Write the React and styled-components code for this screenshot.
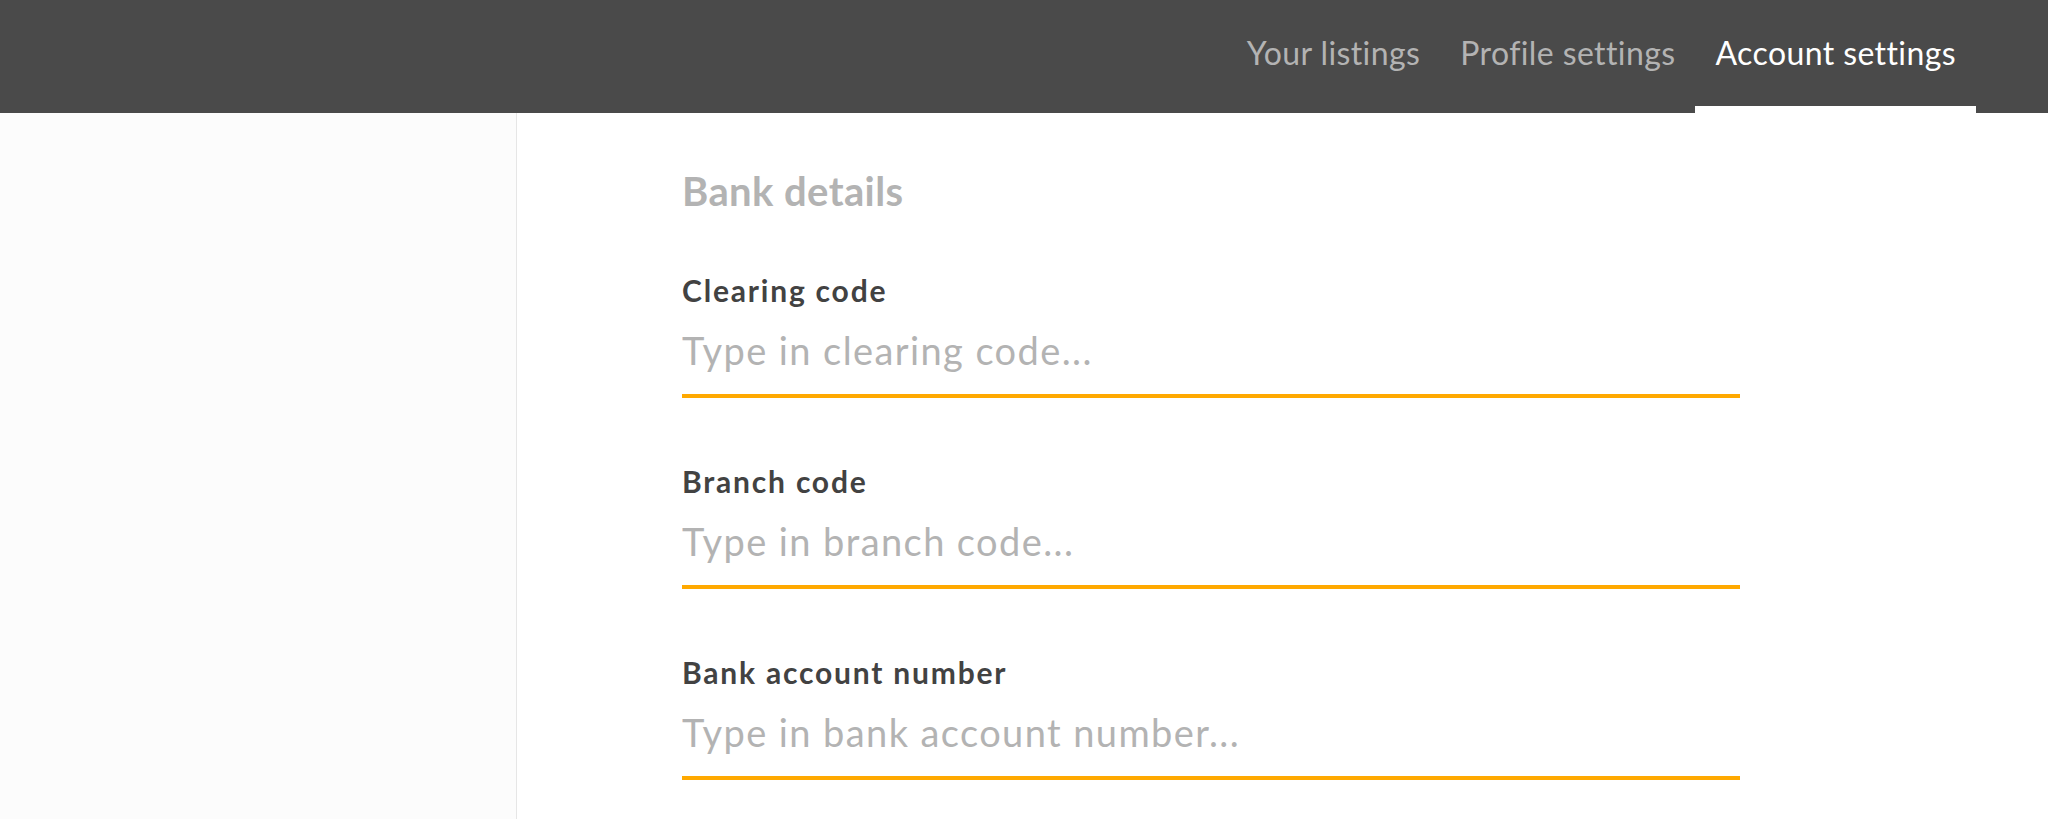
import React from "react";
import styled, { createGlobalStyle, css } from "styled-components";

const GlobalStyle = createGlobalStyle`
  body {
    margin: 0;
    font-family: Lato, "Open Sans", sans-serif;
    background: #fff;
  }

  * {
    box-sizing: border-box;
  }
`;

const StyledHeader = styled.header`
  height: 113px;
  background: #4a4a4a;
  display: flex;
  justify-content: flex-end;
  padding-right: 72px;
`;

const StyledNav = styled.nav`
  display: flex;
  height: 100%;
`;

const StyledNavItem = styled.a`
  display: flex;
  align-items: center;
  padding: 0 20px;
  height: 100%;
  border-bottom: 7px solid transparent;
  font-size: 32px;
  line-height: 1.2;
  letter-spacing: 0.4px;
  color: #b3b3b3;
  text-decoration: none;
  cursor: pointer;
  white-space: nowrap;

  ${({ $isActive }) =>
    $isActive &&
    css`
      color: #fff;
      border-bottom-color: #fff;
    `}
`;

const StyledBody = styled.div`
  display: flex;
  min-height: 706px;
`;

const StyledSidebar = styled.aside`
  width: 517px;
  flex-shrink: 0;
  background: #fcfcfc;
  border-right: 1px solid #e6e6e6;
`;

const StyledMain = styled.main`
  flex: 1;
  padding: 54px 0 0 165px;
`;

const StyledHeading = styled.h2`
  margin: 0 0 57px;
  font-size: 40px;
  line-height: 48px;
  font-weight: 700;
  letter-spacing: 0.4px;
  color: #b3b3b3;
`;

const StyledField = styled.div`
  display: flex;
  flex-direction: column;
  width: 1058px;
  margin-bottom: 65px;
`;

const StyledLabel = styled.label`
  font-size: 30px;
  line-height: 36px;
  font-weight: 700;
  letter-spacing: 1.8px;
  color: #424242;
  margin-bottom: 19px;
`;

const StyledInput = styled.input`
  font-family: inherit;
  font-size: 38px;
  letter-spacing: 1.4px;
  height: 71px;
  line-height: 46px;
  padding: 0 0 21px;
  margin: 0;
  border: none;
  border-bottom: 4px solid #ffa900;
  background: transparent;
  color: #424242;
  outline: none;

  &::placeholder {
    color: #b3b3b3;
    opacity: 1;
  }
`;

const navItems = [
  { name: "Your listings" },
  { name: "Profile settings" },
  { name: "Account settings", active: true },
];

const fields = [
  { id: "clearing", label: "Clearing code", placeholder: "Type in clearing code..." },
  { id: "branch", label: "Branch code", placeholder: "Type in branch code..." },
  { id: "account", label: "Bank account number", placeholder: "Type in bank account number..." },
];

const App = () => (
  <>
    <GlobalStyle />
    <StyledHeader>
      <StyledNav>
        {navItems.map(({ name, active }) => (
          <StyledNavItem key={name} $isActive={active}>
            {name}
          </StyledNavItem>
        ))}
      </StyledNav>
    </StyledHeader>

    <StyledBody>
      <StyledSidebar />
      <StyledMain>
        <StyledHeading>Bank details</StyledHeading>
        {fields.map(({ id, label, placeholder }) => (
          <StyledField key={id}>
            <StyledLabel htmlFor={id}>{label}</StyledLabel>
            <StyledInput id={id} type="text" placeholder={placeholder} />
          </StyledField>
        ))}
      </StyledMain>
    </StyledBody>
  </>
);

export default App;
